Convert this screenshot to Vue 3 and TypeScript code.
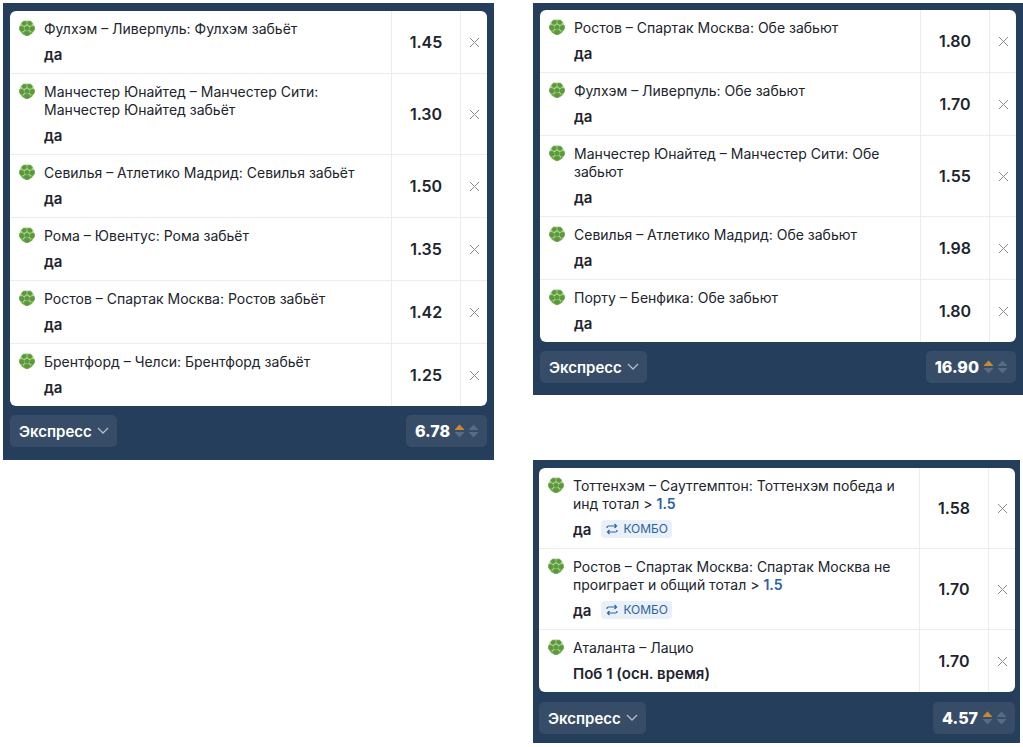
<script setup lang="ts">
interface Bet {
  title: string
  total?: string
  pick: string
  combo?: boolean
  odds: string
}

interface Slip {
  id: string
  bets: Bet[]
  totalOdds: string
}

const first: Slip = {
  id: 'first',
  totalOdds: '6.78',
  bets: [
    { title: 'Фулхэм – Ливерпуль: Фулхэм забьёт', pick: 'да', odds: '1.45' },
    { title: 'Манчестер Юнайтед – Манчестер Сити: Манчестер Юнайтед забьёт', pick: 'да', odds: '1.30' },
    { title: 'Севилья – Атлетико Мадрид: Севилья забьёт', pick: 'да', odds: '1.50' },
    { title: 'Рома – Ювентус: Рома забьёт', pick: 'да', odds: '1.35' },
    { title: 'Ростов – Спартак Москва: Ростов забьёт', pick: 'да', odds: '1.42' },
    { title: 'Брентфорд – Челси: Брентфорд забьёт', pick: 'да', odds: '1.25' },
  ],
}

const second: Slip = {
  id: 'second',
  totalOdds: '16.90',
  bets: [
    { title: 'Ростов – Спартак Москва: Обе забьют', pick: 'да', odds: '1.80' },
    { title: 'Фулхэм – Ливерпуль: Обе забьют', pick: 'да', odds: '1.70' },
    { title: 'Манчестер Юнайтед – Манчестер Сити: Обе забьют', pick: 'да', odds: '1.55' },
    { title: 'Севилья – Атлетико Мадрид: Обе забьют', pick: 'да', odds: '1.98' },
    { title: 'Порту – Бенфика: Обе забьют', pick: 'да', odds: '1.80' },
  ],
}

const third: Slip = {
  id: 'third',
  totalOdds: '4.57',
  bets: [
    { title: 'Тоттенхэм – Саутгемптон: Тоттенхэм победа и инд тотал >', total: '1.5', pick: 'да', combo: true, odds: '1.58' },
    { title: 'Ростов – Спартак Москва: Спартак Москва не проиграет и общий тотал >', total: '1.5', pick: 'да', combo: true, odds: '1.70' },
    { title: 'Аталанта – Лацио', pick: 'Поб 1 (осн. время)', odds: '1.70' },
  ],
}

const columns: Slip[][] = [[first], [second, third]]
</script>

<template>
  <main class="page">
    <div v-for="(column, index) in columns" :key="index" class="column">
      <section v-for="slip in column" :key="slip.id" class="slip" :class="slip.id">
        <ul class="card">
          <li v-for="(bet, i) in slip.bets" :key="i" class="bet">
            <div class="info">
              <svg class="ball" viewBox="0 0 16 16" aria-hidden="true">
                <circle cx="8" cy="8" r="7.700" fill="#b5dc9a" />
                <g fill="#5c993c" stroke="#5c993c" stroke-width="0.600" stroke-linejoin="round">
                  <path d="M8 5.700 10.400 7.300 9.600 10.200H6.400L5.600 7.300Z" />
                  <path d="M7.300 1.500 4.500 1.200 2.600 3 3.600 5.300 5.500 5.500 7.300 4.300Z" />
                  <path d="M8.700 1.500 11.500 1.200 13.400 3 12.400 5.300 10.500 5.500 8.700 4.300Z" />
                  <path d="M2.700 6.200.700 6.600.5 9.400 2 11.600 4.400 11 5.300 9.500 4.600 7Z" />
                  <path d="M13.300 6.200l2 .4.2 2.800L14 11.600 11.600 11 10.700 9.500l.7-2.500Z" />
                  <path d="M5.800 11.200H10.200L11.200 13 10 15.200 8 15.600 6 15.200 4.800 13Z" />
                  <path d="M2.800 12.600 4 12.200 4.700 14.300ZM13.200 12.600 12 12.200 11.300 14.300Z" />
                </g>
              </svg>
              <div class="text">
                <div class="title">{{ bet.title }}<template v-if="bet.total">{{ ' ' }}<b class="total">{{ bet.total }}</b></template></div>
                <div class="pick">
                  <span>{{ bet.pick }}</span>
                  <span v-if="bet.combo" class="combo">
                    <svg viewBox="0 0 12 12" aria-hidden="true">
                      <path d="M1 5V4.500A1.500 1.500 0 0 1 2.500 3H10.500M8.500 1l2 2-2 2M11 7v.5A1.500 1.500 0 0 1 9.500 9H1.500M3.500 7l-2 2 2 2" />
                    </svg>
                    КОМБО
                  </span>
                </div>
              </div>
            </div>
            <div class="odds">{{ bet.odds }}</div>
            <button class="remove" type="button" aria-label="Удалить">
              <svg viewBox="0 0 11 11" aria-hidden="true"><path d="M1 1l9 9M10 1l-9 9" /></svg>
            </button>
          </li>
        </ul>
        <div class="footer">
          <div class="kind">
            <select :id="`kind-${slip.id}`" aria-label="Тип ставки">
              <option>Экспресс</option>
            </select>
            <svg viewBox="0 0 12 8" aria-hidden="true"><path d="M1 1l5 5 5-5" /></svg>
          </div>
          <button class="sum" type="button">
            <span>{{ slip.totalOdds }}</span>
            <svg viewBox="0 0 24 14" aria-hidden="true">
              <path class="up" d="M0 6V5.200L4.500.5 9 5.200V6Z" />
              <path d="M0 8h9v.8L4.500 13.500 0 8.800ZM14 6v-.8L18.500.5 23 5.200V6ZM14 8h9v.8l-4.500 4.700L14 8.800Z" />
            </svg>
          </button>
        </div>
      </section>
    </div>
  </main>
</template>

<style>
body {
  background: #fff;
}
</style>

<style scoped>
.page {
  display: grid;
  grid-template-columns: minmax(0, 491fr) minmax(0, 490fr);
  column-gap: 39px;
  align-items: start;
  padding: 3px 0 4px 3px;
  font-family: Inter, "Liberation Sans", sans-serif;
  color: #20242c;
}

.column {
  display: flex;
  flex-direction: column;
  gap: 65px;
}

.slip {
  padding: 8px 7px 13px;
  background: #253e5c;
}

.second {
  padding: 7px 7px 12px;
}

.third {
  margin-right: 3px;
  padding: 8px 5px 9px 6px;
}

.card {
  margin: 0;
  padding: 0;
  list-style: none;
  background: #fff;
  border-radius: 6px;
  overflow: hidden;
}

.bet {
  display: grid;
  grid-template-columns: minmax(0, 1fr) 69px 27px;
}

.bet + .bet {
  border-top: 1px solid #ebecee;
}

.info {
  display: flex;
  gap: 9px;
  padding: 9px 24px 8px 9px;
}

.ball {
  flex: none;
  width: 16px;
  height: 16px;
}

.title {
  font-size: 14px;
  line-height: 18px;
}

.total {
  font-weight: 600;
  color: #2a62a4;
}

.pick {
  display: flex;
  gap: 10px;
  margin-top: 7px;
  font-size: 15px;
  font-weight: 600;
  line-height: 20px;
}

.combo {
  display: flex;
  align-items: center;
  gap: 5px;
  height: 18px;
  padding: 0 4px 0 5px;
  border-radius: 4px;
  background: #e9f0f9;
  font-size: 12px;
  font-weight: 400;
  color: #2c639f;
}

.combo svg {
  width: 12px;
  height: 12px;
  fill: none;
  stroke: currentColor;
  stroke-width: 1.2;
}

.odds {
  display: flex;
  align-items: center;
  justify-content: center;
  border-left: 1px solid #ebecee;
  font-size: 16px;
  font-weight: 600;
}

.remove {
  display: flex;
  align-items: center;
  justify-content: center;
  padding: 0;
  border: 0;
  border-left: 1px solid #ebecee;
  background: none;
}

.remove svg {
  width: 11px;
  height: 11px;
  fill: none;
  stroke: #8c8c8c;
}

.footer {
  display: flex;
  justify-content: space-between;
  margin-top: 9px;
}

.third .footer {
  margin-top: 10px;
}

.kind {
  display: grid;
  align-items: center;
  border-radius: 5px;
  background: #364c67;
}

.kind select,
.kind svg {
  grid-area: 1 / 1;
}

.kind select {
  appearance: none;
  height: 32px;
  padding: 0 25px 0 9px;
  border: 0;
  background: none;
  font-family: inherit;
  font-size: 15px;
  font-weight: 600;
  color: #fff;
}

.kind svg {
  justify-self: end;
  width: 12px;
  height: 8px;
  margin-right: 8px;
  fill: none;
  stroke: #b4bdca;
  stroke-width: 1.3;
  pointer-events: none;
}

.sum {
  display: flex;
  align-items: center;
  gap: 5px;
  height: 32px;
  padding: 0 8px 0 9px;
  border: 0;
  border-radius: 5px;
  background: #364c67;
  font-family: inherit;
  font-size: 16px;
  font-weight: 800;
  color: #fff;
}

.sum svg {
  width: 24px;
  height: 14px;
  fill: #586b84;
}

.sum .up {
  fill: #c98a2e;
}
</style>
